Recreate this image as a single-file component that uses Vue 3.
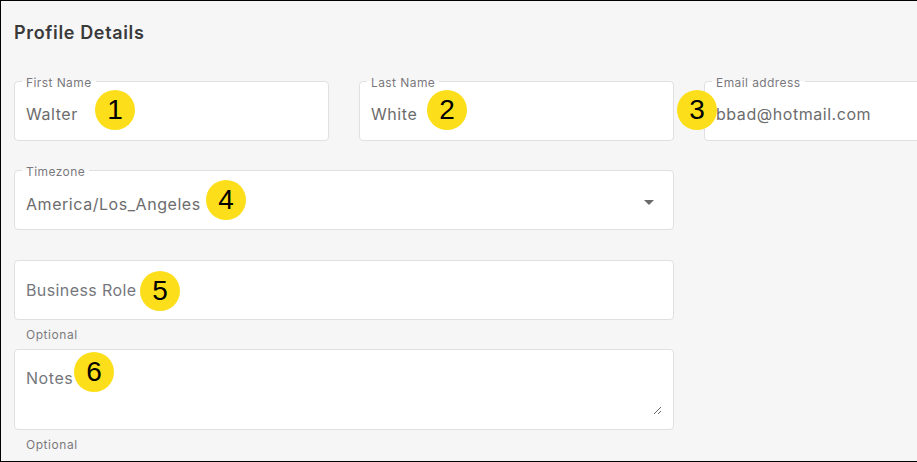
<script setup>
const nameFields = [
  { label: 'First Name', value: 'Walter', badge: 1, cls: 'b1' },
  { label: 'Last Name', value: 'White', badge: 2, cls: 'b2' },
  { label: 'Email address', value: 'bbad@hotmail.com', badge: 3, cls: 'b3' }
]
</script>

<template>
  <main class="frame">
    <h1 class="title">Profile Details</h1>
    <section class="row">
      <div v-for="f in nameFields" :key="f.label" class="field half">
        <span class="legend">{{ f.label }}</span>
        <span class="value">{{ f.value }}</span>
        <span class="badge" :class="f.cls">{{ f.badge }}</span>
      </div>
    </section>
    <div class="field wide timezone">
      <span class="legend">Timezone</span>
      <span class="value">America/Los_Angeles</span>
      <span class="caret"></span>
      <span class="badge b4">4</span>
    </div>
    <div class="field wide role">
      <span class="value muted">Business Role</span>
      <span class="badge b5">5</span>
    </div>
    <p class="hint">Optional</p>
    <div class="field wide notes">
      <textarea class="area" placeholder="Notes"></textarea>
      <span class="badge b6">6</span>
    </div>
    <p class="hint">Optional</p>
  </main>
</template>

<style scoped>
.frame {
  box-sizing: border-box;
  width: 917px;
  height: 462px;
  overflow: hidden;
  background: #f6f6f6;
  border: solid #000;
  border-width: 1px 0 1px 1px;
  padding: 22px 0 0 13px;
  font-family: Inter, sans-serif;
  color: #6f6f6f;
}
.title {
  margin: 0;
  font: 600 18px/19px Inter, sans-serif;
  letter-spacing: 0.65px;
  color: #3a3a3a;
}
.row {
  display: flex;
  gap: 30px;
  margin-top: 39px;
  width: 1000px;
}
.field {
  position: relative;
  box-sizing: border-box;
  height: 60px;
  background: #fff;
  border: 1px solid #e0e0e0;
  border-radius: 4px;
  display: flex;
  align-items: center;
  padding: 6px 11px 0;
  flex: none;
}
.half { width: 315px; }
.wide { width: 660px; }
.timezone { margin-top: 29px; padding-top: 8px; }
.role { margin-top: 30px; padding-top: 0; }
.notes {
  height: 81px;
  margin-top: 8px;
  padding: 12px 11px 14px;
  align-items: stretch;
}
.legend {
  position: absolute;
  top: -6px;
  left: 7px;
  padding: 0 4px;
  background: linear-gradient(#f6f6f6 5px, #fff 5px);
  font: 400 12px/13px Inter, sans-serif;
  letter-spacing: 0.42px;
  color: #7a787d;
}
.value {
  font: 400 16px/20px Inter, sans-serif;
  letter-spacing: 0.55px;
  color: #6c6c6c;
}
.muted { color: #75777d; letter-spacing: 0.4px; }
.caret {
  position: absolute;
  right: 19px;
  top: 29px;
  border: 5px solid transparent;
  border-top-color: #6b6b6b;
  border-bottom: 0;
}
.hint {
  margin: 8px 0 0 12px;
  font: 400 12px/13px Inter, sans-serif;
  letter-spacing: 0.55px;
  color: #7a7a7d;
}
.area {
  flex: 1;
  border: 0;
  outline: 0;
  padding: 6px 0 0;
  margin: 0;
  background: transparent;
  resize: vertical;
  font: 400 16px/20px Inter, sans-serif;
  letter-spacing: 0.55px;
  color: #75777d;
}
.area::placeholder { color: #75777d; opacity: 1; }
.badge {
  position: absolute;
  width: 40px;
  height: 40px;
  border-radius: 50%;
  background: #fcdf1a;
  color: #000;
  display: flex;
  align-items: center;
  justify-content: center;
  font: 400 28px/1 "Liberation Sans", sans-serif;
}
.b1 { left: 80px; top: 8px; }
.b2 { left: 67px; top: 8px; }
.b3 { left: -28px; top: 8px; }
.b4 { left: 191px; top: 9px; }
.b5 { left: 125px; top: 10px; }
.b6 { left: 59px; top: 2px; }
</style>

<style>
html, body { margin: 0; overflow: hidden; }
</style>
